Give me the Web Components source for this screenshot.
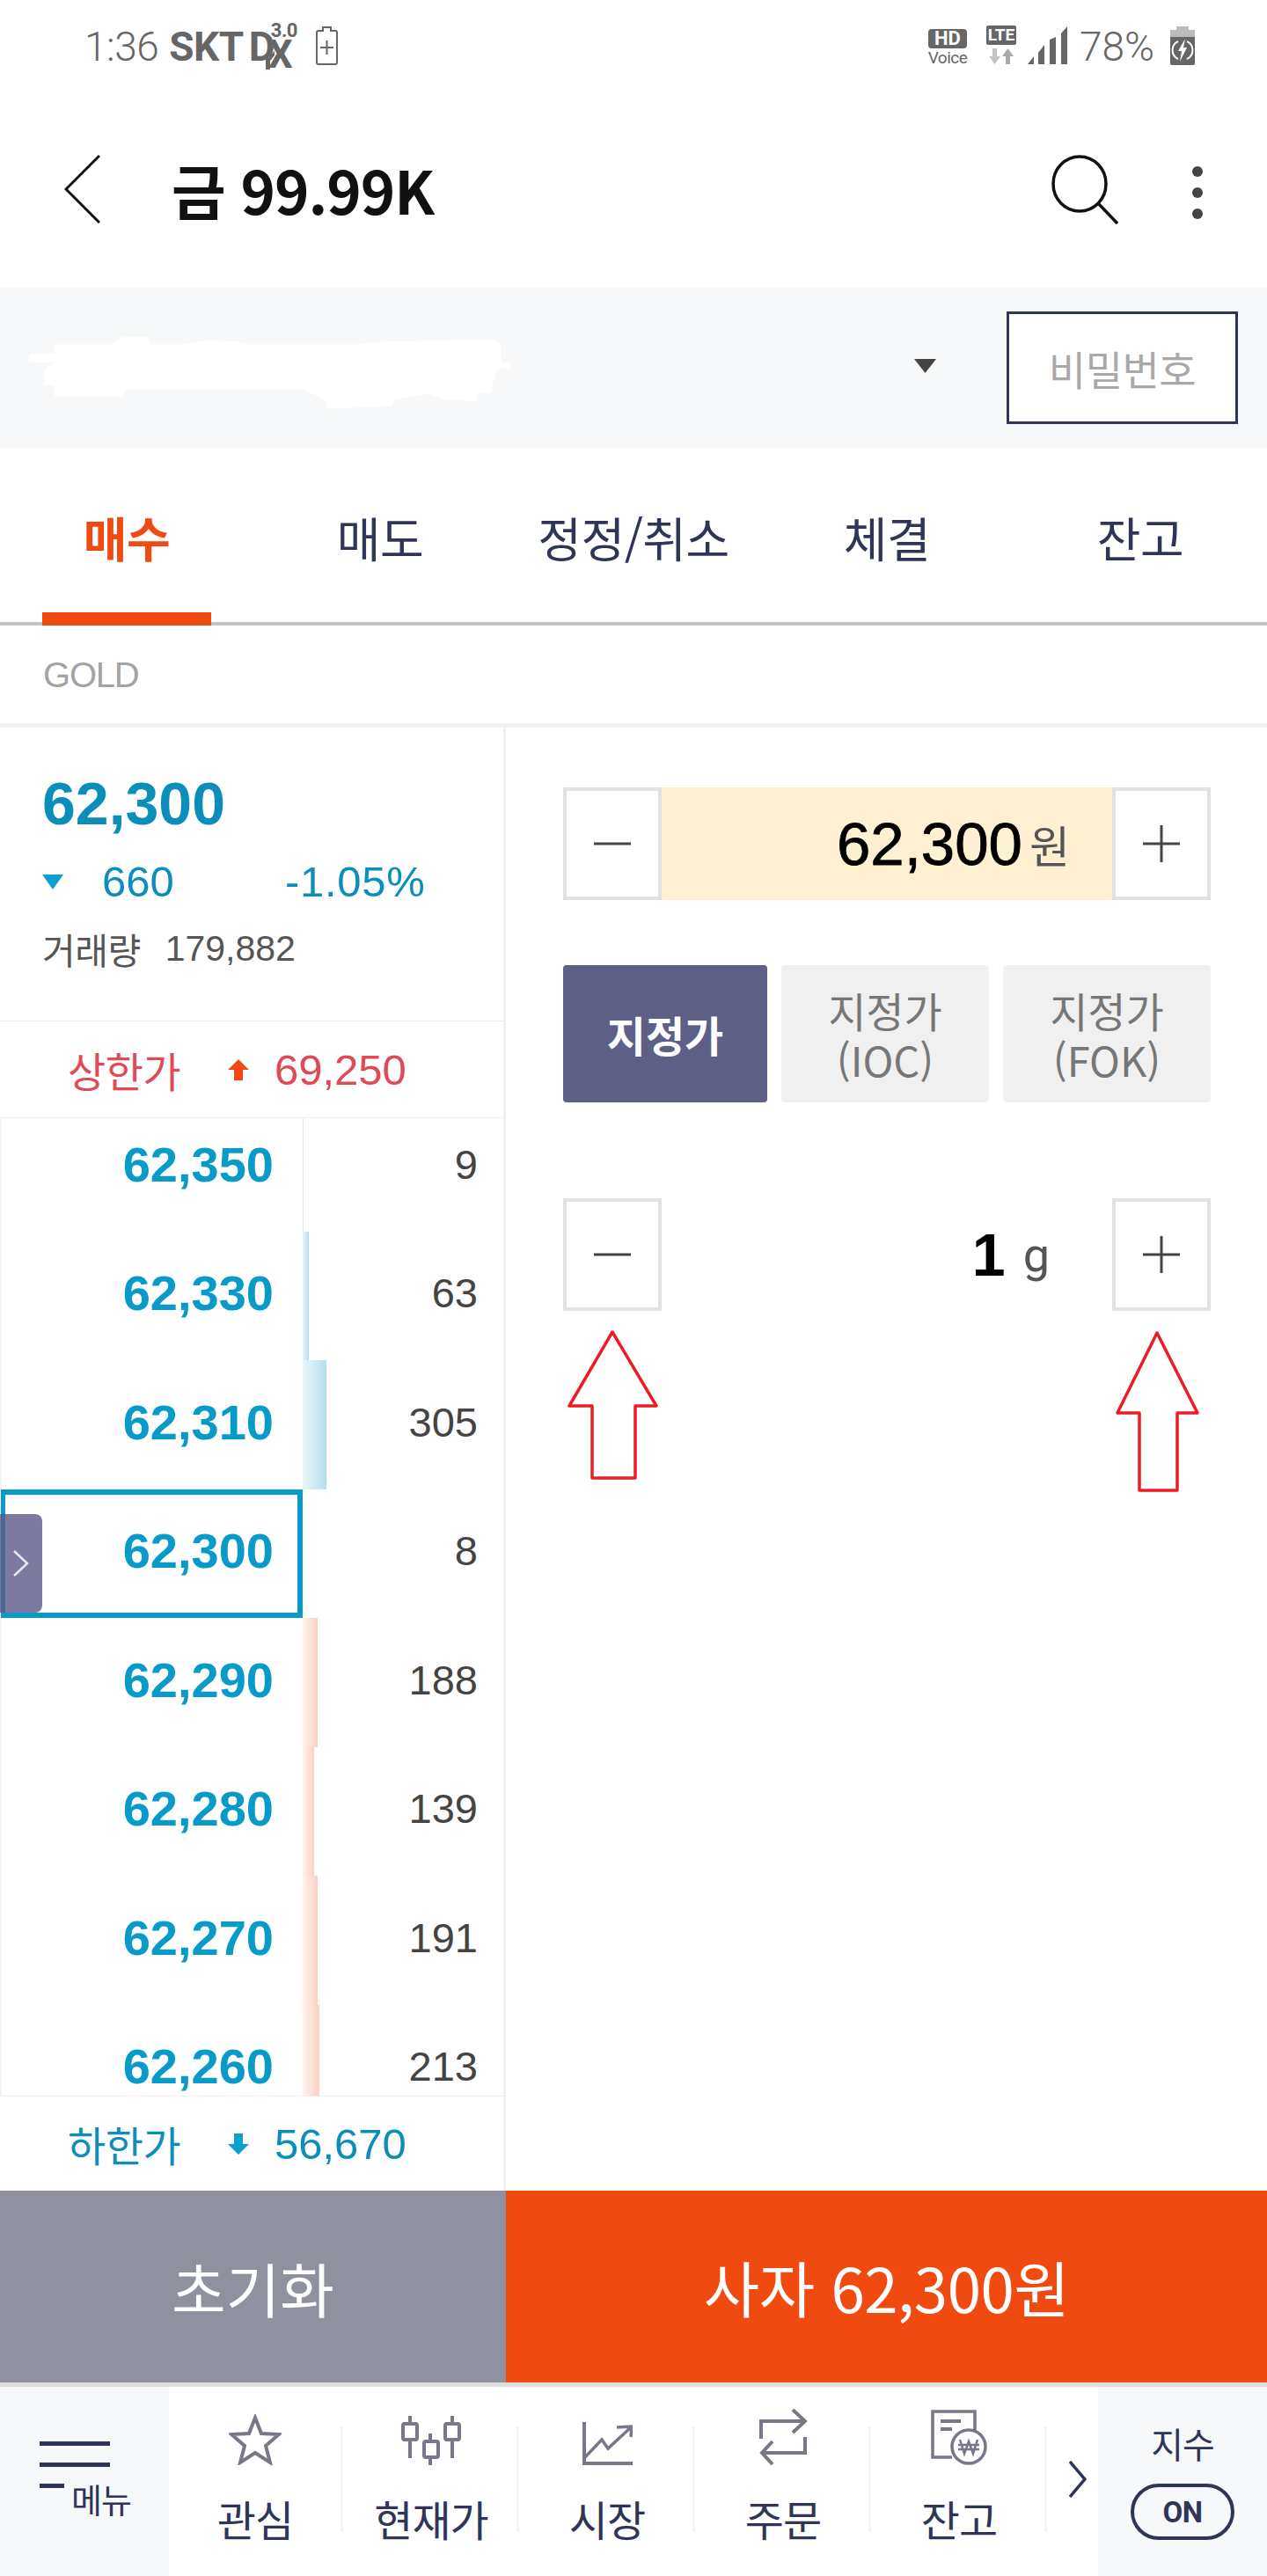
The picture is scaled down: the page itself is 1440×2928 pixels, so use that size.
<!DOCTYPE html>
<html lang="ko">
<head>
<meta charset="utf-8">
<title>금 99.99K</title>
<style>
    html, body { margin: 0; background: #fff; }
    body { width: 1440px; height: 2928px; position: relative; overflow: hidden; font-family: "Liberation Sans", "Noto Sans CJK KR", sans-serif; }
    order-page { display: block; }
</style>
</head>
<body>
<order-page></order-page>

<script>
const KR = '"Noto Sans CJK KR", "Liberation Sans", sans-serif';
const NUM = '"Liberation Sans", "Noto Sans CJK KR", sans-serif';

// Top phone status bar
class StatusBar extends HTMLElement {
    constructor() {
        super();
        this.attachShadow({ mode: 'open' });
        this.shadowRoot.innerHTML = `
            <style>
                :host { display: flex; height: 120px; box-sizing: border-box; padding-left: 96px; padding-right: 82px; align-items: flex-start; color: #666; font-family: Roboto, sans-serif; }
                .time { font-size: 46px; font-weight: 300; line-height: 46px; margin-top: 30px; letter-spacing: -.5px; }
                .carrier { font-size: 46px; font-weight: 700; line-height: 46px; margin-top: 30px; margin-left: 12px; letter-spacing: -.5px; }
                .dx { position: relative; width: 54px; height: 60px; margin-left: 6px; }
                .dx b { position: absolute; }
                .dx .d { left: 0; top: 30px; font-size: 46px; line-height: 46px; letter-spacing: -12px; }
                .dx .x { left: 22px; top: 46px; font-size: 44px; line-height: 33px; }
                .dx .v { left: 25px; top: 25px; font-size: 22px; line-height: 20px; letter-spacing: -.5px; }
                .dx svg { position: absolute; left: 19px; top: 58px; }
                .batt1 { margin-left: 22px; margin-top: 30px; }
                .gap { flex: 1; }
                .hd { width: 44px; margin-top: 33px; display: flex; flex-direction: column; align-items: center; }
                .hd b { width: 44px; height: 22px; background: #666; color: #fff; border-radius: 4px; font: 700 22px/22px Roboto, sans-serif; text-align: center; }
                .hd span { font: 400 19px/18px "Liberation Sans Narrow", Roboto, sans-serif; margin-top: 2px; letter-spacing: -.5px; }
                .lte { width: 34px; margin-left: 22px; margin-top: 29px; display: flex; flex-direction: column; align-items: center; }
                .lte b { width: 34px; height: 22px; background: #666; color: #fff; border-radius: 2px; font: 700 19px/22px "Liberation Sans Narrow", Roboto, sans-serif; text-align: center; }
                .lte svg { margin-top: 4px; }
                .sig { margin-left: 13px; margin-top: 30px; }
                .pct { font-size: 46px; font-weight: 300; line-height: 46px; margin-top: 30px; margin-left: 14px; }
                .batt2 { margin-left: 18px; margin-top: 30px; }
            </style>
            <span class="time">1:36</span>
            <span class="carrier">SKT</span>
            <span class="dx"><b class="d">D</b><b class="x">X</b><b class="v">3.0</b>
                <svg width="10" height="21" viewBox="0 0 10 21" fill="#666"><path d="M0 8H4V6L10 0V5L5 11V21H0Z"/></svg>
            </span>
            <svg class="batt1" width="25" height="44" viewBox="0 0 25 44" fill="none" stroke="#666" stroke-width="2">
                <path d="M8 5V1H17V5H22Q24 5 24 7V41Q24 43 22 43H3Q1 43 1 41V7Q1 5 3 5Z"/>
                <path d="M5 24H20M12.5 16V32"/>
            </svg>
            <span class="gap"></span>
            <span class="hd"><b>HD</b><span>Voice</span></span>
            <span class="lte"><b>LTE</b>
                <svg width="30" height="18" viewBox="0 0 30 18">
                    <path d="M5 0H10V9H14L7.5 18L1 9H5Z" fill="#c4c4c4"/>
                    <path d="M20 18H25V9H29L22.5 0L16 9H20Z" fill="#aaa"/>
                </svg>
            </span>
            <svg class="sig" width="45" height="43" viewBox="0 0 45 43" fill="#666">
                <path d="M0 43L7 34V43Z"/>
                <path d="M12 43V30L19 21V43Z"/>
                <path d="M25 43V15L32 12V43Z"/>
                <path d="M38 43V8L45 0V43Z"/>
            </svg>
            <span class="pct">78%</span>
            <svg class="batt2" width="28" height="44" viewBox="0 0 28 44">
                <path d="M7 0H21V4H28V12H0V4H7Z" fill="#bbb"/>
                <path d="M0 12H28V42Q28 44 26 44H2Q0 44 0 42Z" fill="#666"/>
                <path d="M9 17A11 11 0 0 0 9 37M19 17A11 11 0 0 1 19 37" fill="none" stroke="#fff" stroke-width="2"/>
                <path d="M17 14L9 28H13L11 40L19 24H15Z" fill="#fff"/>
            </svg>
        `;
    }
}

// Title bar with back, search and more
class AppHeader extends HTMLElement {
    constructor() {
        super();
        this.attachShadow({ mode: 'open' });
        this.shadowRoot.innerHTML = `
            <style>
                :host { display: flex; height: 207px; box-sizing: border-box; padding: 56px 0 0 73px; align-items: flex-start; }
                .title { font: 700 67px/78px ${KR}; color: #111; margin-left: 81px; letter-spacing: -1px; flex: 1; }
                svg { display: block; }
                .more { margin-left: 83px; margin-right: 72px; margin-top: 12px; }
            </style>
            <svg width="41" height="78" viewBox="0 0 41 78" fill="none" stroke="#111" stroke-width="3">
                <path d="M40 1L2 39L40 77"/>
            </svg>
            <div class="title">금 99.99K</div>
            <svg width="76" height="79" viewBox="0 0 76 79" fill="none" stroke="#111" stroke-width="3.5">
                <ellipse cx="32" cy="33" rx="30" ry="31"/>
                <path d="M53 55L75 78"/>
            </svg>
            <svg class="more" width="14" height="62" viewBox="0 0 14 62" fill="#444">
                <circle cx="7" cy="7" r="6"/><circle cx="7" cy="31" r="6"/><circle cx="7" cy="55" r="6"/>
            </svg>
        `;
    }
}

// Account selector, the account name is painted out in the reference
class AccountBar extends HTMLElement {
    constructor() {
        super();
        this.attachShadow({ mode: 'open' });
        this.shadowRoot.innerHTML = `
            <style>
                :host { display: flex; height: 183px; background: #f7f8fa; align-items: flex-start; }
                .blot { margin-top: 38px; width: 720px; height: 106px; flex: none; }
                .tri { margin-left: 319px; margin-top: 81px; flex: none; }
                button { margin-left: 80px; margin-top: 27px; width: 263px; height: 128px; box-sizing: border-box; border: 3px solid #2f3557; background: #fff; color: #a8a8a8; font: 400 46px ${KR}; padding: 0; letter-spacing: -.5px; }
            </style>
            <svg class="blot" viewBox="0 1100 1568 320" preserveAspectRatio="none" fill="#fff">
                <path d="M135 1180H280L300 1155H365L370 1180H450L510 1165L590 1170L600 1180H880L960 1170L1125 1165H1220L1240 1180V1240H1265V1262H1230L1215 1345L1180 1350V1375L1100 1370L1060 1350L975 1370L970 1392L810 1400L805 1370L750 1335H310L305 1358H135V1320H108L110 1270L135 1240H72V1215L135 1210Z"/>
            </svg>
            <svg class="tri" width="25" height="16" viewBox="0 0 25 16" fill="#444"><path d="M0 0H25L12.5 16Z"/></svg>
            <button>비밀번호</button>
        `;
    }
}

// Buy / sell / amend / fills / balance tabs
class OrderTabs extends HTMLElement {
    constructor() {
        super();
        this.attachShadow({ mode: 'open' });
        this.shadowRoot.innerHTML = `
            <style>
                :host { display: grid; grid-template-columns: repeat(5, 288px); height: 201px; box-sizing: border-box; border-bottom: 4px solid #c4c4c4; font: 400 54px ${KR}; color: #2f3557; }
                div { position: relative; display: flex; justify-content: center; padding-top: 65px; line-height: 72px; letter-spacing: -.5px; }
                .on { color: #f04a10; font-weight: 700; }
                .on::after { content: ""; position: absolute; left: 48px; right: 48px; bottom: -4px; height: 15px; background: #f04a10; }
            </style>
            <div class="on">매수</div><div>매도</div><div>정정/취소</div><div>체결</div><div>잔고</div>
        `;
    }
}

class SectionLabel extends HTMLElement {
    constructor() {
        super();
        this.attachShadow({ mode: 'open' });
        this.shadowRoot.innerHTML = `
            <style>
                :host { display: block; height: 116px; box-sizing: border-box; border-bottom: 5px solid #f0f0f0; padding: 31px 0 0 49px; color: #a3a3a3; font: 400 40px/50px ${NUM}; letter-spacing: -1.2px; }
            </style>
            <slot></slot>
        `;
    }
}

// Current price summary above the order book
class QuoteInfo extends HTMLElement {
    constructor() {
        super();
        this.attachShadow({ mode: 'open' });
        this.shadowRoot.innerHTML = `
            <style>
                :host { display: block; height: 334px; box-sizing: border-box; border-bottom: 1px solid #eee; padding: 50px 0 0 48px; font-family: ${NUM}; position: relative; }
                .price { font-size: 68px; font-weight: 700; line-height: 72px; color: #0b8fba; }
                .chg { display: flex; align-items: center; margin-top: 28px; height: 50px; color: #0b8fba; font-size: 49px; }
                .chg .a { margin-left: 44px; width: 208px; }
                .chg .b { letter-spacing: .7px; }
                .vol { display: flex; align-items: center; margin-top: 26px; height: 50px; color: #555; }
                .vol .k { font: 400 41px ${KR}; letter-spacing: -.5px; }
                .vol .v { font-size: 41px; margin-left: 28px; }
            </style>
            <div class="price">62,300</div>
            <div class="chg">
                <svg width="24" height="17" viewBox="0 0 24 17" fill="#0aa0cf"><path d="M0 0H24L12 17Z"/></svg>
                <span class="a">660</span><span class="b">-1.05%</span>
            </div>
            <div class="vol"><span class="k">거래량</span><span class="v">179,882</span></div>
        `;
    }
}

// Upper / lower limit row
class LimitRow extends HTMLElement {
    constructor() {
        super();
        this.attachShadow({ mode: 'open' });
        const down = this.hasAttribute('down');
        const arrow = down
            ? '<path d="M7 0H17V12H24L12 24L0 12H7Z"/>'
            : '<path d="M12 0L24 12H17V24H7V12H0Z"/>';
        this.shadowRoot.innerHTML = `
            <style>
                :host { display: flex; align-items: center; box-sizing: border-box; padding-left: 77px; color: ${down ? '#0b8fba' : '#e04a55'}; height: ${down ? 107 : 109}px; }
                .k { font: 400 47px ${KR}; width: 182px; letter-spacing: -.5px; flex: none; white-space: nowrap; }
                .v { font: 400 49px ${NUM}; margin-left: 29px; }
                svg { flex: none; }
            </style>
            <span class="k">${this.getAttribute('label')}</span>
            <svg width="24" height="24" viewBox="0 0 24 24" fill="${down ? '#0aa0cf' : '#f04a10'}">${arrow}</svg>
            <span class="v">${this.getAttribute('value')}</span>
        `;
    }
}

// One price level of the order book
class BookRow extends HTMLElement {
    constructor() {
        super();
        this.attachShadow({ mode: 'open' });
        const side = this.getAttribute('side');
        const bar = this.getAttribute('bar') || 0;
        const grad = side === 'ask'
            ? 'linear-gradient(90deg, #eaf7fb, #b5dfee)'
            : 'linear-gradient(90deg, #fff3ef, #fcd0c2)';
        this.shadowRoot.innerHTML = `
            <style>
                :host { display: grid; grid-template-columns: 344px 1fr; height: 146.5px; font-family: ${NUM}; position: relative; }
                .p { display: flex; align-items: center; justify-content: flex-end; padding-right: 33px; padding-bottom: 6px; font-size: 56px; font-weight: 700; color: #089ac8; box-sizing: border-box; }
                .q { position: relative; display: flex; align-items: center; justify-content: flex-end; padding-right: 29px; padding-bottom: 6px; font-size: 47px; color: #444; }
                .bar { position: absolute; left: 0; top: 0; bottom: 0; width: ${bar}px; background: ${grad}; }
                :host([current]) .p { border: 6px solid #089ac8; border-left-width: 5px; padding-right: 27px; padding-bottom: 6px; margin-left: 1px; }
                .tab { display: none; }
                :host([current]) .tab { display: flex; position: absolute; left: 0; top: 28px; width: 48px; height: 112px; background: rgba(92, 88, 136, .8); border-radius: 0 8px 8px 0; align-items: center; justify-content: center; }
            </style>
            <div class="p">${this.getAttribute('price')}</div>
            <div class="q"><span class="bar"></span>${this.getAttribute('qty')}</div>
            <div class="tab">
                <svg width="18" height="30" viewBox="0 0 18 30" fill="none" stroke="#e8e8f0" stroke-width="2.5"><path d="M1 1L16 15L1 29"/></svg>
            </div>
        `;
    }
}

class OrderBook extends HTMLElement {
    constructor() {
        super();
        this.attachShadow({ mode: 'open' });
        this.shadowRoot.innerHTML = `
            <style>
                :host { display: block; height: 1113px; overflow: hidden; box-sizing: border-box; border-top: 1px solid #f0f0f0; border-bottom: 1px solid #eee; background: linear-gradient(#f3f4f6, #f3f4f6) left / 2px 100% no-repeat; }
                .in { margin-top: -18px; }
            </style>
            <div class="in"><slot></slot></div>
        `;
    }
}

// Left column: quote, limits and book
class BookPanel extends HTMLElement {
    constructor() {
        super();
        this.attachShadow({ mode: 'open' });
        this.shadowRoot.innerHTML = `
            <style>
                :host { display: block; width: 575px; box-sizing: border-box; border-right: 3px solid #f0f0f0; flex: none; }
            </style>
            <quote-info></quote-info>
            <limit-row label="상한가" value="69,250"></limit-row>
            <order-book>
                <book-row side="ask" price="62,350" qty="9" bar="1"></book-row>
                <book-row side="ask" price="62,330" qty="63" bar="7"></book-row>
                <book-row side="ask" price="62,310" qty="305" bar="27"></book-row>
                <book-row side="ask" price="62,300" qty="8" current></book-row>
                <book-row side="bid" price="62,290" qty="188" bar="17"></book-row>
                <book-row side="bid" price="62,280" qty="139" bar="13"></book-row>
                <book-row side="bid" price="62,270" qty="191" bar="17"></book-row>
                <book-row side="bid" price="62,260" qty="213" bar="19"></book-row>
            </order-book>
            <limit-row down label="하한가" value="56,670"></limit-row>
        `;
    }
}

// Square +/- button
class StepButton extends HTMLElement {
    constructor() {
        super();
        this.attachShadow({ mode: 'open' });
        const d = this.getAttribute('kind') === 'plus' ? 'M0 21H42M21 0V42' : 'M0 21H42';
        this.shadowRoot.innerHTML = `
            <style>
                :host { display: flex; width: 112px; height: 128px; box-sizing: border-box; border: 4px solid #e2e2e2; background: #fff; align-items: center; justify-content: center; flex: none; }
            </style>
            <svg width="42" height="42" viewBox="0 0 42 42" fill="none" stroke="#444" stroke-width="3"><path d="${d}"/></svg>
        `;
    }
}

// Stepper row, middle part is slotted
class StepperRow extends HTMLElement {
    constructor() {
        super();
        this.attachShadow({ mode: 'open' });
        this.shadowRoot.innerHTML = `
            <style>
                :host { display: flex; height: 128px; }
                .mid { flex: 1; display: flex; align-items: center; justify-content: flex-end; background: var(--mid-bg, transparent); padding-right: var(--mid-pad, 53px); }
            </style>
            <step-button kind="minus"></step-button>
            <div class="mid"><slot></slot></div>
            <step-button kind="plus"></step-button>
        `;
    }
}

class OrderTypes extends HTMLElement {
    constructor() {
        super();
        this.attachShadow({ mode: 'open' });
        this.shadowRoot.innerHTML = `
            <style>
                :host { display: grid; grid-template-columns: 232px 236px 236px; gap: 16px; height: 156px; margin-top: 74px; font-family: ${KR}; }
                div { display: flex; align-items: center; justify-content: center; text-align: center; border-radius: 4px; background: #f0f0f0; color: #777; font-size: 47px; line-height: 56px; padding-top: 2px; box-sizing: border-box; }
                .on { background: #5d5f87; color: #fff; font-weight: 700; font-size: 48px; padding-top: 0; }
            </style>
            <div class="on">지정가</div>
            <div>지정가<br>(IOC)</div>
            <div>지정가<br>(FOK)</div>
        `;
    }
}

// Right column: price, order type, quantity
class OrderForm extends HTMLElement {
    constructor() {
        super();
        this.attachShadow({ mode: 'open' });
        this.shadowRoot.innerHTML = `
            <style>
                :host { display: block; flex: 1; box-sizing: border-box; padding: 68px 64px 0 65px; position: relative; }
                .price { --mid-bg: #fef1d2; --mid-pad: 48px; }
                .qty { --mid-pad: 71px; margin-top: 109px; }
                b { color: #000; font-family: ${NUM}; }
                .price b { font-size: 69px; font-weight: 400; -webkit-text-stroke: .8px #000; }
                .price span { font: 400 50px ${KR}; color: #555; margin-left: 8px; }
                .qty b { font-size: 68px; }
                .qty span { font: 400 54px Roboto, sans-serif; color: #555; margin-left: 20px; }
                .mark { position: absolute; left: 0; top: 0; overflow: visible; pointer-events: none; }
            </style>
            <stepper-row class="price"><b>62,300</b><span>원</span></stepper-row>
            <order-types></order-types>
            <stepper-row class="qty"><b>1</b><span>g</span></stepper-row>
            <svg class="mark" width="865" height="900" viewBox="575 827 865 900" fill="none" stroke="#ed1c24" stroke-width="3.5" stroke-linejoin="round">
                <path d="M696 1514L647 1598H673V1680H722V1598H746Z"/>
                <path d="M1315 1515L1270 1606H1295V1694H1338V1606H1361Z"/>
            </svg>
        `;
    }
}

class ActionButtons extends HTMLElement {
    constructor() {
        super();
        this.attachShadow({ mode: 'open' });
        this.shadowRoot.innerHTML = `
            <style>
                :host { display: grid; grid-template-columns: 575px 1fr; height: 223px; box-sizing: border-box; border-bottom: 5px solid #dedede; color: #fff; font: 400 67px ${KR}; }
                div { display: flex; align-items: center; justify-content: center; }
                .reset { background: #8f929e; }
                .buy { background: #f04a10; font-size: 69px; letter-spacing: -.5px; }
            </style>
            <div class="reset">초기화</div>
            <div class="buy">사자 62,300원</div>
        `;
    }
}

// Bottom nav entry: icon slot and label slot
class NavItem extends HTMLElement {
    constructor() {
        super();
        this.attachShadow({ mode: 'open' });
        this.shadowRoot.innerHTML = `
            <style>
                :host { display: flex; flex-direction: column; align-items: center; width: 200px; height: 215px; box-sizing: border-box; position: relative; color: #2f3557; font: 400 48px ${KR}; flex: none; }
                .ic { height: 64px; margin-top: 25px; display: flex; align-items: flex-end; justify-content: center; }
                .lb { margin-top: 28px; line-height: 64px; letter-spacing: -1px; }
                :host::after { content: ""; position: absolute; right: 0; top: 45px; width: 3px; height: 120px; background: #f4f4f4; }
            </style>
            <div class="ic"><slot name="icon"></slot></div>
            <div class="lb"><slot></slot></div>
        `;
    }
}

class BottomNav extends HTMLElement {
    constructor() {
        super();
        this.attachShadow({ mode: 'open' });
        this.shadowRoot.innerHTML = `
            <style>
                :host { display: flex; height: 215px; font-family: ${KR}; color: #2f3557; }
                .menu { width: 192px; background: #f7f8fa; flex: none; box-sizing: border-box; padding: 62px 0 0 45px; position: relative; }
                .menu i { display: block; height: 5px; background: #2f3557; width: 80px; margin-bottom: 19px; }
                .menu i.s { width: 28px; }
                .menu span { position: absolute; left: 81px; top: 103px; font-size: 38px; line-height: 48px; letter-spacing: -1px; }
                .items { display: flex; flex: none; width: 1000px; margin-left: -2px; }
                .next { flex: none; width: 50px; padding: 84px 0 0 25px; box-sizing: border-box; }
                .idx { width: 192px; background: #f7f8fa; flex: none; display: flex; flex-direction: column; align-items: center; padding-top: 36px; box-sizing: border-box; margin-left: auto; }
                .idx span { font-size: 40px; line-height: 56px; letter-spacing: -1px; }
                .idx b { width: 118px; height: 64px; border: 4px solid #2f3557; border-radius: 32px; box-sizing: border-box; margin-top: 18px; display: flex; align-items: center; justify-content: center; font: 700 33px Roboto, sans-serif; letter-spacing: -.5px; }
                svg { display: block; }
            </style>
            <div class="menu"><i></i><i></i><i class="s"></i><span>메뉴</span></div>
            <div class="items">
                <nav-item>
                    <svg slot="icon" width="60" height="58" viewBox="0 0 60 58" fill="none" stroke="#777887" stroke-width="4" stroke-linejoin="miter">
                        <path d="M30 4L37 22L57 23L42 36L47 55L30 44L13 55L18 36L3 23L23 22Z"/>
                    </svg>관심</nav-item>
                <nav-item>
                    <svg slot="icon" width="68" height="56" viewBox="0 0 68 56" fill="#fff" stroke="#777887" stroke-width="4">
                        <path d="M10 0V48M33 20V56M58 0V48"/>
                        <rect x="2" y="9" width="16" height="18" rx="2"/><rect x="26" y="29" width="16" height="18" rx="2"/><rect x="50" y="9" width="16" height="18" rx="2"/>
                    </svg>현재가</nav-item>
                <nav-item>
                    <svg slot="icon" width="57" height="49" viewBox="0 0 57 49" fill="none" stroke="#777887" stroke-width="4">
                        <path d="M2 0V47H57"/>
                        <path d="M1 42L22 20L29 30L54 7M39 6L56 5L55 17" stroke-width="3.5"/>
                    </svg>시장</nav-item>
                <nav-item>
                    <svg slot="icon" width="54" height="64" viewBox="0 0 54 64" fill="none" stroke="#777887" stroke-width="4">
                        <path d="M2 34V14H52M38 1L52 14L38 27"/>
                        <path d="M52 32V50H3M15 37L3 50L15 63"/>
                    </svg>주문</nav-item>
                <nav-item>
                    <svg slot="icon" width="65" height="63" viewBox="0 0 65 63" fill="none" stroke="#777887" stroke-width="3.5">
                        <path d="M24 54H2V2H50V24"/>
                        <path d="M11 13H34M11 22H24" stroke-width="4"/>
                        <circle cx="43" cy="42" r="19" fill="#fff"/>
                        <path d="M33 34L38 50L43 36L48 50L53 34M31 40H55M31 45H55" stroke-width="2.5"/>
                    </svg>잔고</nav-item>
            </div>
            <div class="next">
                <svg width="20" height="42" viewBox="0 0 20 42" fill="none" stroke="#2f3557" stroke-width="3.5"><path d="M1 1L18 21L1 41"/></svg>
            </div>
            <div class="idx"><span>지수</span><b>ON</b></div>
        `;
    }
}

// Whole screen, flows top to bottom
class OrderPage extends HTMLElement {
    constructor() {
        super();
        this.attachShadow({ mode: 'open' });
        this.shadowRoot.innerHTML = `
            <style>
                :host { display: flex; flex-direction: column; width: 1440px; height: 2928px; }
                .main { display: flex; height: 1663px; }
            </style>
            <status-bar></status-bar>
            <app-header></app-header>
            <account-bar></account-bar>
            <order-tabs></order-tabs>
            <section-label>GOLD</section-label>
            <div class="main">
                <book-panel></book-panel>
                <order-form></order-form>
            </div>
            <action-buttons></action-buttons>
            <bottom-nav></bottom-nav>
        `;
    }
}

customElements.define('status-bar', StatusBar);
customElements.define('app-header', AppHeader);
customElements.define('account-bar', AccountBar);
customElements.define('order-tabs', OrderTabs);
customElements.define('section-label', SectionLabel);
customElements.define('quote-info', QuoteInfo);
customElements.define('limit-row', LimitRow);
customElements.define('book-row', BookRow);
customElements.define('order-book', OrderBook);
customElements.define('book-panel', BookPanel);
customElements.define('step-button', StepButton);
customElements.define('stepper-row', StepperRow);
customElements.define('order-types', OrderTypes);
customElements.define('order-form', OrderForm);
customElements.define('action-buttons', ActionButtons);
customElements.define('nav-item', NavItem);
customElements.define('bottom-nav', BottomNav);
customElements.define('order-page', OrderPage);
</script>
</body>
</html>
